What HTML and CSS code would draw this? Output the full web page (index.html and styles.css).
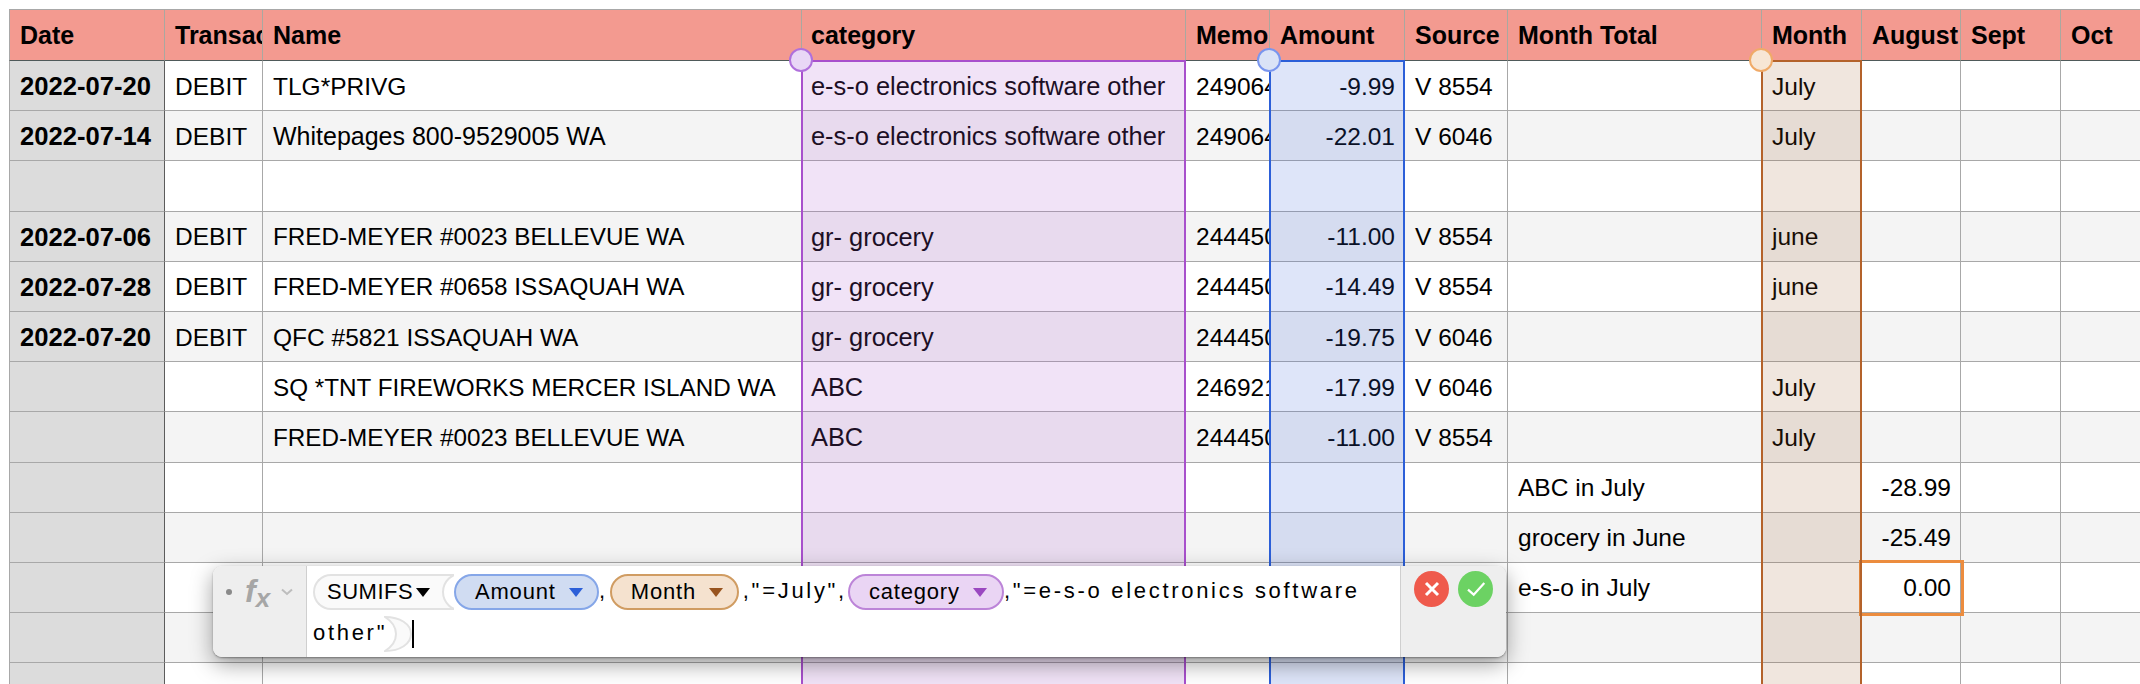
FILE: index.html
```html
<!DOCTYPE html>
<html lang="en">
<head>
    <meta charset="UTF-8">
    <title>Transactions</title>
    <link rel="stylesheet" href="styles.css">
</head>
<body>

<div class="sheet">
    <table class="grid">
        <colgroup>
            <col class="c-date"><col class="c-trans"><col class="c-name"><col class="c-cat"><col class="c-memo"><col class="c-amount">
            <col class="c-source"><col class="c-total"><col class="c-month"><col class="c-aug"><col class="c-sept"><col class="c-oct"><col class="c-rest">
        </colgroup>
        <thead>
            <tr><th>Date</th><th>Transaction</th><th>Name</th><th class="cat-head">category</th><th>Memo</th><th>Amount</th><th>Source</th><th>Month Total</th><th>Month</th><th>August</th><th>Sept</th><th>Oct</th><th></th></tr>
        </thead>
        <tbody>
            <tr><td>2022-07-20</td><td>DEBIT</td><td>TLG*PRIVG</td><td class="wide">e-s-o electronics software other</td><td>24906472</td><td class="num">-9.99</td><td>V 8554</td><td></td><td>July</td><td></td><td></td><td></td><td></td></tr>
            <tr><td>2022-07-14</td><td>DEBIT</td><td class="mixed">Whitepages 800-9529005 WA</td><td class="wide">e-s-o electronics software other</td><td>24906472</td><td class="num">-22.01</td><td>V 6046</td><td></td><td>July</td><td></td><td></td><td></td><td></td></tr>
            <tr><td></td><td></td><td></td><td></td><td></td><td></td><td></td><td></td><td></td><td></td><td></td><td></td><td></td></tr>
            <tr><td>2022-07-06</td><td>DEBIT</td><td class="caps">FRED-MEYER #0023 BELLEVUE WA</td><td class="wide">gr- grocery</td><td>24445001</td><td class="num">-11.00</td><td>V 8554</td><td></td><td>june</td><td></td><td></td><td></td><td></td></tr>
            <tr><td>2022-07-28</td><td>DEBIT</td><td class="caps">FRED-MEYER #0658 ISSAQUAH WA</td><td class="wide">gr- grocery</td><td>24445001</td><td class="num">-14.49</td><td>V 8554</td><td></td><td>june</td><td></td><td></td><td></td><td></td></tr>
            <tr><td>2022-07-20</td><td>DEBIT</td><td>QFC #5821 ISSAQUAH WA</td><td class="wide">gr- grocery</td><td>24445001</td><td class="num">-19.75</td><td>V 6046</td><td></td><td></td><td></td><td></td><td></td><td></td></tr>
            <tr><td></td><td></td><td class="caps">SQ *TNT FIREWORKS MERCER ISLAND WA</td><td class="wide">ABC</td><td>24692172</td><td class="num">-17.99</td><td>V 6046</td><td></td><td>July</td><td></td><td></td><td></td><td></td></tr>
            <tr><td></td><td></td><td class="caps">FRED-MEYER #0023 BELLEVUE WA</td><td class="wide">ABC</td><td>24445001</td><td class="num">-11.00</td><td>V 8554</td><td></td><td>July</td><td></td><td></td><td></td><td></td></tr>
            <tr><td></td><td></td><td></td><td></td><td></td><td></td><td></td><td>ABC in July</td><td></td><td class="num">-28.99</td><td></td><td></td><td></td></tr>
            <tr><td></td><td></td><td></td><td></td><td></td><td></td><td></td><td>grocery in June</td><td></td><td class="num">-25.49</td><td></td><td></td><td></td></tr>
            <tr><td></td><td></td><td></td><td></td><td></td><td></td><td></td><td>e-s-o in July</td><td></td><td class="num editing">0.00</td><td></td><td></td><td></td></tr>
            <tr><td></td><td></td><td></td><td></td><td></td><td></td><td></td><td></td><td></td><td></td><td></td><td></td><td></td></tr>
            <tr><td></td><td></td><td></td><td></td><td></td><td></td><td></td><td></td><td></td><td></td><td></td><td></td><td></td></tr>
        </tbody>
    </table>

    <!-- rangos de las columnas referenciadas -->
    <div class="range range-cat"><span class="handle"></span></div>
    <div class="range range-amount"><span class="handle"></span></div>
    <div class="range range-month"><span class="handle"></span></div>

    <div class="editor">
        <div class="editor-side">
            <span class="dot"></span>
            <span class="fx">f<span class="fx-sub">x</span></span>
            <svg class="chevron" width="12" height="8" viewBox="0 0 12 8"><path d="M1 1.500 6 6l5-4.500" fill="none" stroke="#bdbdbd" stroke-width="2"/></svg>
        </div>
        <div class="editor-formula">
            <span class="token token-fn">SUMIFS<i class="arrow"></i></span><span class="token token-amount">Amount<i class="arrow"></i></span>,<span class="token token-month">Month<i class="arrow"></i></span>,"=July",<span class="token token-cat">category<i class="arrow"></i></span>,"=e-s-o electronics software other"<svg class="close-paren" width="29" height="36" viewBox="0 0 29 36"><path d="M1 1C16 1 27 8 27 18S16 35 1 35C9 30 12 24 12 18S9 6 1 1Z" fill="#fafafa" stroke="#e2e2e2" stroke-width="2"/></svg><span class="cursor"></span>
        </div>
        <div class="editor-actions">
            <span class="btn btn-cancel">
                <svg width="16" height="16" viewBox="0 0 16 16"><path d="M2 2l12 12M14 2L2 14" fill="none" stroke="#fff" stroke-width="3"/></svg>
            </span>
            <span class="btn btn-ok">
                <svg width="20" height="20" viewBox="0 0 20 20"><path d="M2 10.700l5.700 5L18.300 4" fill="none" stroke="#fff" stroke-width="2.200"/></svg>
            </span>
        </div>
    </div>
</div>

</body>
</html>
```

FILE: styles.css
```css
html, body {
    margin: 0;
    padding: 0;
    height: 100%;
    overflow: hidden;
    background-color: #fff;
}
.sheet {
    position: relative;
    width: 2140px;
    height: 684px;
    overflow: hidden;
    padding: 9px 0 0 9px;
    box-sizing: border-box;
    font-family: "Liberation Sans", Arial, sans-serif;
    color: #000;
}
.grid {
    table-layout: fixed;
    width: 2260px;
    border-collapse: separate;
    border-spacing: 0;
    font-size: 24.5px;
}
.c-date { width: 156px; }
.c-trans { width: 98px; }
.c-name { width: 539px; }
.c-cat { width: 384px; }
.c-memo { width: 84px; }
.c-amount { width: 135px; }
.c-source { width: 103px; }
.c-total { width: 254px; }
.c-month { width: 100px; }
.c-aug { width: 99px; }
.c-sept { width: 100px; }
.c-oct { width: 100px; }
.c-rest { width: 108px; }

.grid th, .grid td {
    box-sizing: border-box;
    padding: 2px 9px 0 10px;
    overflow: hidden;
    white-space: nowrap;
    text-align: left;
    border-right: 1px solid #a8a8a8;
    border-bottom: 1px solid #a8a8a8;
}
.grid th {
    height: 52px;
    padding-top: 0;
    font-size: 25px;
    font-weight: bold;
    background-color: #f39a90;
    border-top: 1px solid #a8a8a8;
    border-right-color: #aaa8a0;
    border-bottom-color: #4f5a5a;
}
.grid th:first-child, .grid td:first-child {
    border-left: 1px solid #a8a8a8;
}
.grid td {
    height: 50.2px;
}
.grid tbody tr:nth-child(even) td {
    background-color: #f4f4f4;
}
.grid tbody td:first-child, .grid tbody tr:nth-child(even) td:first-child {
    font-size: 25.6px;
    font-weight: bold;
    background-color: #dcdcdc;
    border-right-color: #5c5c5c;
}
.grid .wide, .grid .cat-head {
    padding-left: 9px;
}
.grid .wide {
    font-size: 25.4px;
}
.grid .mixed {
    font-size: 25px;
}
.grid .caps {
    font-size: 24.25px;
}
.grid td.num {
    text-align: right;
}
.grid td.editing {
    outline: 3px solid #ec8c3e;
}

.range {
    position: absolute;
    top: 60px;
    bottom: 0;
    box-sizing: border-box;
    border-style: solid;
    border-width: 2px 2px 0 2px;
}
.range-cat {
    left: 801px;
    width: 385px;
    background-color: rgba(170, 90, 210, 0.17);
    border-color: #a850cc;
}
.range-amount {
    left: 1269px;
    width: 136px;
    background-color: rgba(60, 100, 220, 0.17);
    border-color: #2c5fd8;
}
.range-month {
    left: 1761px;
    width: 101px;
    background-color: rgba(155, 88, 35, 0.15);
    border-color: #b4622a;
}
.handle {
    position: absolute;
    top: -14px;
    left: -14px;
    width: 24px;
    height: 24px;
    box-sizing: border-box;
    border-radius: 50%;
    border: 2px solid;
}
.range-cat .handle { background-color: #e9d7f6; border-color: #b070dc; }
.range-amount .handle { background-color: #dbe3f6; border-color: #7a96ee; }
.range-month .handle { background-color: #f7e6d5; border-color: #f0aa68; }

.editor {
    position: absolute;
    left: 213px;
    top: 566px;
    width: 1293px;
    height: 91px;
    display: flex;
    border-radius: 9px;
    background-color: #fff;
    box-shadow: 0 1px 2px rgba(0, 0, 0, 0.35), 0 7px 22px rgba(0, 0, 0, 0.38);
}
.editor-side {
    width: 94px;
    flex: none;
    box-sizing: border-box;
    display: flex;
    align-items: flex-start;
    background-color: #eeeeee;
    border-right: 1px solid #cfcfcf;
    border-radius: 9px 0 0 9px;
    padding: 8px 0 0 13px;
}
.dot {
    width: 6px;
    height: 6px;
    margin-top: 15px;
    border-radius: 50%;
    background-color: #8a8a8a;
}
.fx {
    margin-left: 13px;
    font-size: 32px;
    line-height: 34px;
    font-weight: bold;
    font-style: italic;
    color: #a6a6a6;
}
.fx-sub {
    font-size: 26px;
    position: relative;
    top: 5px;
}
.chevron {
    margin: 14px 0 0 11px;
}
.editor-formula {
    flex: 1;
    box-sizing: border-box;
    padding: 4px 6px 0 6px;
    font-size: 22px;
    line-height: 42px;
    letter-spacing: 2.7px;
}
.token {
    display: inline-flex;
    align-items: center;
    box-sizing: border-box;
    height: 36px;
    vertical-align: middle;
    letter-spacing: 0.8px;
    border: 2px solid;
    border-radius: 18px;
}
.token-fn {
    position: relative;
    width: 141px;
    overflow: hidden;
    padding-left: 12px;
    letter-spacing: 0.5px;
    background-color: #fafafa;
    border-color: #e2e2e2;
    border-right: 0;
    border-radius: 18px 0 0 18px;
}
.token-fn::after {
    content: "";
    position: absolute;
    right: -30px;
    top: -4px;
    width: 42px;
    height: 40px;
    box-sizing: border-box;
    border: 2px solid #e2e2e2;
    border-radius: 50%;
    background-color: #fff;
}
.token-amount { width: 145px; padding-left: 19px; background-color: #d0dcf2; border-color: #85a6e8; }
.token-month { width: 129px; padding-left: 19px; background-color: #f5e2cf; border-color: #d09c62; }
.token-cat { width: 156px; padding-left: 19px; background-color: #ead5f4; border-color: #bc84d8; }
.token-month { margin: 0 4px 0 2px; }
.token-cat { margin: 0 0 0 1px; }
.arrow {
    width: 0;
    height: 0;
    margin-left: 13px;
    border-left: 7px solid transparent;
    border-right: 7px solid transparent;
    border-top: 9px solid #2c5fd8;
}
.token-fn .arrow { margin-left: 3px; border-top-color: #000; }
.token-month .arrow { border-top-color: #98541f; }
.token-cat .arrow { border-top-color: #9a48c0; }
.close-paren {
    vertical-align: middle;
    margin-left: -3px;
}
.cursor {
    display: inline-block;
    width: 2px;
    height: 28px;
    margin-left: -1px;
    vertical-align: middle;
    background-color: #000;
}
.editor-actions {
    width: 106px;
    flex: none;
    box-sizing: border-box;
    display: flex;
    align-items: flex-start;
    gap: 9px;
    padding: 5px 0 0 13px;
    background-color: #eeeeee;
    border-left: 1px solid #cfcfcf;
    border-radius: 0 9px 9px 0;
}
.btn {
    width: 35px;
    height: 36px;
    border-radius: 50%;
    display: flex;
    align-items: center;
    justify-content: center;
}
.btn-cancel { background-color: #ef5a4c; }
.btn-ok { background-color: #6cd263; }
```
